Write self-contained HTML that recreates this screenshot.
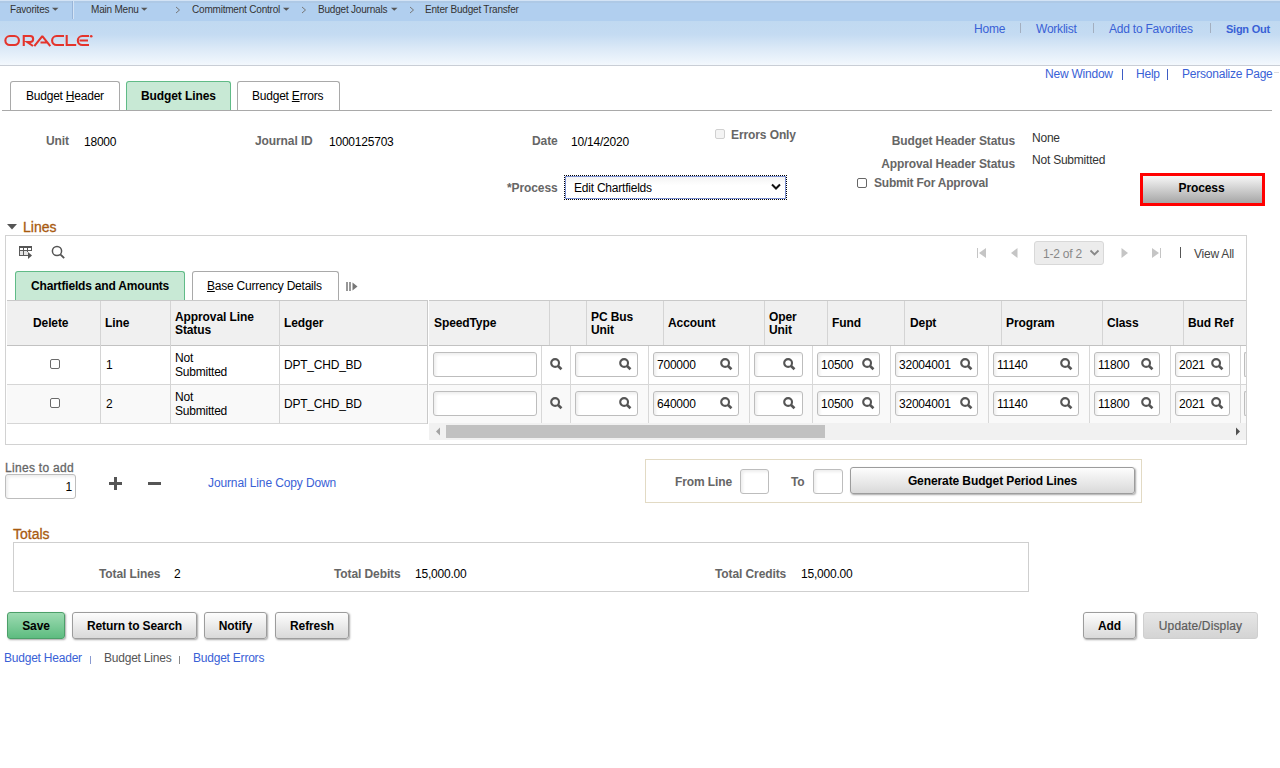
<!DOCTYPE html>
<html><head><meta charset="utf-8">
<style>
*{box-sizing:border-box;margin:0;padding:0}
html,body{width:1280px;height:768px;overflow:hidden;background:#fff}
body{font-family:"Liberation Sans",sans-serif;font-size:12px;color:#000;position:relative}
.a{position:absolute;white-space:nowrap;line-height:14px;letter-spacing:-0.22px}
.b,.lbl,.btn{letter-spacing:-0.1px}
.b{font-weight:bold}
.lbl{color:#666;font-weight:bold}
.lnk{color:#3961d6}
.u{text-decoration:underline}
.hdrbar{position:absolute;left:0;top:0;width:1280px;height:21px;background:linear-gradient(#aec9e6 0,#aec9e6 2px,#b1cfef 2px);border-top:1px solid #d3e3f5}
.hdr{position:absolute;left:0;top:21px;width:1280px;height:44px;background:linear-gradient(#c0d9f1 0%,#c4dbf2 30%,#dbe9f7 62%,#f3f8fd 100%)}
.hline{position:absolute;left:0;top:65px;width:1280px;height:1px;background:#c9ced6}
.nav{position:absolute;top:2.5px;font-size:10px;line-height:14px;color:#333;white-space:nowrap;letter-spacing:-0.2px}
.caret{display:inline-block;width:0;height:0;border-left:4px solid transparent;border-right:4px solid transparent;border-top:4px solid #444;vertical-align:middle;margin-left:2px}
.tab{position:absolute;border:1px solid #a9a9a9;border-bottom:none;border-radius:3px 3px 0 0;background:#fff}
.tab.on{background:#c8e9d5;border-color:#60bb87}
.chk{position:absolute;width:11px;height:11px;border:1px solid #888;border-radius:2px;background:#fff}
.inp{position:absolute;border:1px solid #bdbdbd;border-radius:3px;background:#fff;box-shadow:inset 2px 2px 3px rgba(0,0,0,0.07)}
.btn{position:absolute;border:1px solid #9c9c9c;border-radius:3px;background:linear-gradient(#fdfdfd,#d9d9d9);box-shadow:1px 1px 2px rgba(0,0,0,0.35);font-weight:bold;text-align:center;line-height:26px}
</style></head><body>

<!-- top nav bar -->
<div class="hdrbar"></div>
<div class="hdr"></div>
<div class="hline"></div>
<div class="a" style="left:72px;top:1px;width:1px;height:18px;background:#98b5d9"></div><div class="a" style="left:73px;top:1px;width:1px;height:18px;background:#d5e4f5"></div>
<div class="nav" style="left:10px">Favorites</div>
<div class="nav" style="left:91px">Main Menu</div>
<div class="nav" style="left:192px">Commitment Control</div>
<div class="nav" style="left:318px">Budget Journals</div>
<div class="nav" style="left:425px">Enter Budget Transfer</div>
<svg class="a" style="left:52px;top:7px" width="7" height="5" viewBox="0 0 7 5"><path d="M0 0.8H6.5L3.25 3.8Z" fill="#555"/></svg>
<svg class="a" style="left:141px;top:7px" width="7" height="5" viewBox="0 0 7 5"><path d="M0 0.8H6.5L3.25 3.8Z" fill="#555"/></svg>
<svg class="a" style="left:283px;top:7px" width="7" height="5" viewBox="0 0 7 5"><path d="M0 0.8H6.5L3.25 3.8Z" fill="#555"/></svg>
<svg class="a" style="left:391px;top:7px" width="7" height="5" viewBox="0 0 7 5"><path d="M0 0.8H6.5L3.25 3.8Z" fill="#555"/></svg>
<svg class="a" style="left:175px;top:6px" width="6" height="8" viewBox="0 0 6 8"><path d="M1 1L4.5 4L1 7" fill="none" stroke="#777" stroke-width="1"/></svg>
<svg class="a" style="left:301px;top:6px" width="6" height="8" viewBox="0 0 6 8"><path d="M1 1L4.5 4L1 7" fill="none" stroke="#777" stroke-width="1"/></svg>
<svg class="a" style="left:409px;top:6px" width="6" height="8" viewBox="0 0 6 8"><path d="M1 1L4.5 4L1 7" fill="none" stroke="#777" stroke-width="1"/></svg>

<!-- oracle logo -->
<svg class="a" style="left:0;top:30px" width="100" height="22" viewBox="0 30 100 22">
<g fill="none" stroke="#e4342c" stroke-width="2.1">
<rect x="5.35" y="36.05" width="13.6" height="9" rx="4.5"/>
<path d="M23.75 46V36.05H30.2a2.95 2.95 0 0 1 0 5.9H27.2L33 46"/>
<path d="M34.3 46.2L42.3 36.2L50.3 46.2M40.5 42.5H47.6" stroke-linejoin="bevel"/>
<path d="M64 36.05H56.6a4.5 4.5 0 0 0 0 9H64"/>
<path d="M66.7 35V45.05H76.2"/>
<path d="M89 36.05H82.3a4.5 4.5 0 0 0 0 9H89M79.5 40.55H88"/>
</g>
<circle cx="91.2" cy="36.3" r="1.3" fill="#e4342c"/>
</svg>

<!-- header links -->
<div class="a lnk" style="left:974px;top:22px">Home</div>
<div class="a" style="left:1020px;top:23px;width:1px;height:10px;background:#a3afc0"></div>
<div class="a lnk" style="left:1036px;top:22px">Worklist</div>
<div class="a" style="left:1093px;top:23px;width:1px;height:10px;background:#a3afc0"></div>
<div class="a lnk" style="left:1109px;top:22px">Add to Favorites</div>
<div class="a" style="left:1210px;top:23px;width:1px;height:10px;background:#a3afc0"></div>
<div class="a lnk b" style="left:1226px;top:22px;font-size:11px;letter-spacing:-0.25px">Sign Out</div>

<div class="a lnk" style="left:1045px;top:67px">New Window</div>
<div class="a" style="left:1122px;top:69px;width:1px;height:11px;background:#3d5cc4"></div>
<div class="a lnk" style="left:1136px;top:67px">Help</div>
<div class="a" style="left:1167px;top:69px;width:1px;height:11px;background:#3d5cc4"></div>
<div class="a lnk" style="left:1182px;top:67px">Personalize Page</div>
<div class="a" style="left:1274px;top:72px;width:5px;height:1px;background:#dcdcdc"></div>

<!-- page tabs -->
<div class="tab" style="left:10px;top:81px;width:110px;height:29px"></div>
<div class="tab on" style="left:126px;top:81px;width:105px;height:29px"></div>
<div class="tab" style="left:237px;top:81px;width:103px;height:29px"></div>
<div class="a" style="left:26px;top:89px">Budget <span class="u">H</span>eader</div>
<div class="a b" style="left:141px;top:89px">Budget Lines</div>
<div class="a" style="left:252px;top:89px">Budget <span class="u">E</span>rrors</div>
<div class="a" style="left:2px;top:110px;width:1270px;height:1px;background:#a9a9a9"></div>

<!-- header fields -->
<div class="a lbl" style="left:46px;top:134px">Unit</div>
<div class="a" style="left:84px;top:135px">18000</div>
<div class="a lbl" style="left:255px;top:134px">Journal ID</div>
<div class="a" style="left:329px;top:135px">1000125703</div>
<div class="a lbl" style="left:532px;top:134px">Date</div>
<div class="a" style="left:571px;top:135px">10/14/2020</div>
<div class="chk" style="left:715px;top:129px;width:10px;height:10px;border-color:#d0d0d0;background:#f4f4f4"></div>
<div class="a lbl" style="left:731px;top:128px">Errors Only</div>
<div class="a lbl" style="left:850px;top:134px;width:165px;text-align:right">Budget Header Status</div>
<div class="a" style="left:1032px;top:131px;color:#333">None</div>
<div class="a lbl" style="left:850px;top:157px;width:165px;text-align:right">Approval Header Status</div>
<div class="a" style="left:1032px;top:153px;color:#333">Not Submitted</div>
<div class="chk" style="left:857px;top:178px;width:10px;height:10px;border-color:#666"></div>
<div class="a lbl" style="left:874px;top:176px;letter-spacing:-0.22px">Submit For Approval</div>
<div class="a lbl" style="left:507px;top:181px">*Process</div>
<div class="a" style="left:564px;top:175px;width:223px;height:25px;border:1px dotted #000"></div>
<div class="a" style="left:565px;top:176px;width:221px;height:23px;border:1px solid #7b8fd0;background:linear-gradient(#f4f4f4,#fff 40%)"></div>
<div class="a" style="left:574px;top:181px">Edit Chartfields</div>
<svg class="a" style="left:771px;top:183px" width="10" height="8" viewBox="0 0 10 8"><path d="M1 1.5L5 5.5L9 1.5" fill="none" stroke="#111" stroke-width="2"/></svg>
<div class="a" style="left:1140px;top:173px;width:125px;height:33px;border:3px solid #f00;background:linear-gradient(#f7f7f7,#a6a6a6)"></div>
<div class="a b" style="left:1142px;top:181px;width:119px;text-align:center">Process</div>

<!-- Lines section -->
<svg class="a" style="left:6px;top:223px" width="12" height="8" viewBox="0 0 12 8"><path d="M1 1H11L6 6.5Z" fill="#555"/></svg>
<div class="a" style="left:23px;top:220px;font-size:14px;line-height:14px;color:#a85a10;letter-spacing:0;-webkit-text-stroke:0.3px #a85a10">Lines</div>
<div class="a" style="left:5px;top:235px;width:1242px;height:210px;border:1px solid #d2d2d2"></div>

<!-- grid toolbar -->
<svg class="a" style="left:19px;top:246px" width="14" height="14" viewBox="0 0 14 14">
<rect x="0" y="0" width="13" height="2" fill="#555"/>
<rect x="1" y="5" width="8" height="4" fill="#e4e4e4"/>
<path d="M0.5 2V10M4.5 2V10M8.5 2V6M12.5 2V5M0 4.5H13M0 9.5H9" stroke="#5a5a5a" stroke-width="1" fill="none"/>
<path d="M9 6V13L13 9.5Z" fill="#555"/>
</svg>
<svg class="a" style="left:51px;top:245px" width="15" height="15" viewBox="0 0 15 15"><circle cx="6" cy="6" r="4.6" fill="none" stroke="#555" stroke-width="1.5"/><path d="M9.3 9.3L13.2 13.2" stroke="#555" stroke-width="1.8"/></svg>

<svg class="a" style="left:976px;top:247px" width="12" height="12" viewBox="0 0 12 12"><path d="M1.5 1V11" stroke="#c5c5c5" stroke-width="1"/><path d="M10 1V11L3 6Z" fill="#c5c5c5"/></svg>
<svg class="a" style="left:1010px;top:247px" width="9" height="12" viewBox="0 0 9 12"><path d="M7.5 1V11L1 6Z" fill="#c5c5c5"/></svg>
<div class="a" style="left:1034px;top:241px;width:70px;height:24px;border:1px solid #d8d8d8;border-radius:3px;background:#ececec"></div>
<div class="a" style="left:1043px;top:247px;color:#888">1-2 of 2</div>
<svg class="a" style="left:1089px;top:249px" width="11" height="8" viewBox="0 0 11 8"><path d="M1.5 1.5L5.5 5.5L9.5 1.5" fill="none" stroke="#888" stroke-width="1.8"/></svg>
<svg class="a" style="left:1120px;top:247px" width="9" height="12" viewBox="0 0 9 12"><path d="M1.5 1V11L8 6Z" fill="#c5c5c5"/></svg>
<svg class="a" style="left:1151px;top:247px" width="12" height="12" viewBox="0 0 12 12"><path d="M1 1V11L8 6Z" fill="#c5c5c5"/><path d="M9.5 1V11" stroke="#c5c5c5" stroke-width="1"/></svg>
<div class="a" style="left:1180px;top:247px;width:1px;height:11px;background:#555"></div>
<div class="a" style="left:1194px;top:247px;color:#444">View All</div>

<!-- grid tabs -->
<div class="tab on" style="left:15px;top:271px;width:170px;height:30px"></div>
<div class="tab" style="left:192px;top:271px;width:147px;height:30px"></div>
<div class="a b" style="left:31px;top:279px;letter-spacing:-0.18px">Chartfields and Amounts</div>
<div class="a" style="left:207px;top:279px"><span class="u">B</span>ase Currency Details</div>
<svg class="a" style="left:346px;top:282px" width="12" height="10" viewBox="0 0 12 10"><path d="M1 0V9M4 0V9" stroke="#777" stroke-width="1.5"/><path d="M6.5 0.5V8.5L11.5 4.5Z" fill="#777"/></svg>

<!-- GRID -->
<div class="a" style="left:7px;top:300px;width:421px;height:46px;background:#f0f0f0;border-top:1px solid #c9c9c9;border-bottom:1px solid #c2c2c2"></div>
<div class="a" style="left:429px;top:300px;width:817px;height:46px;background:#f0f0f0;border-top:1px solid #c9c9c9;border-bottom:1px solid #c2c2c2"></div>
<div class="a" style="left:427px;top:300px;width:1px;height:124px;background:#c9c9c9"></div>
<div class="a" style="left:549px;top:301px;width:1px;height:44px;background:#d4d4d4"></div>
<div class="a" style="left:586px;top:301px;width:1px;height:44px;background:#d4d4d4"></div>
<div class="a" style="left:663px;top:301px;width:1px;height:44px;background:#d4d4d4"></div>
<div class="a" style="left:764px;top:301px;width:1px;height:44px;background:#d4d4d4"></div>
<div class="a" style="left:827px;top:301px;width:1px;height:44px;background:#d4d4d4"></div>
<div class="a" style="left:904px;top:301px;width:1px;height:44px;background:#d4d4d4"></div>
<div class="a" style="left:1001px;top:301px;width:1px;height:44px;background:#d4d4d4"></div>
<div class="a" style="left:1102px;top:301px;width:1px;height:44px;background:#d4d4d4"></div>
<div class="a" style="left:1183px;top:301px;width:1px;height:44px;background:#d4d4d4"></div>
<div class="a" style="left:7px;top:346px;width:420px;height:38px;background:#fff"></div>
<div class="a" style="left:7px;top:384px;width:420px;height:40px;background:#f9f9f9;border-top:1px solid #d6d6d6;border-bottom:1px solid #d6d6d6"></div>
<div class="a" style="left:429px;top:346px;width:817px;height:38px;background:#fff"></div>
<div class="a" style="left:429px;top:384px;width:817px;height:39px;background:#f9f9f9;border-top:1px solid #d6d6d6"></div>
<div class="a" style="left:100px;top:301px;width:1px;height:122px;background:#d4d4d4"></div>
<div class="a" style="left:170px;top:301px;width:1px;height:122px;background:#d4d4d4"></div>
<div class="a" style="left:279px;top:301px;width:1px;height:122px;background:#d4d4d4"></div>
<div class="a" style="left:541px;top:346px;width:1px;height:77px;background:#d8d8d8"></div>
<div class="a" style="left:570px;top:346px;width:1px;height:77px;background:#d8d8d8"></div>
<div class="a" style="left:648px;top:346px;width:1px;height:77px;background:#d8d8d8"></div>
<div class="a" style="left:749px;top:346px;width:1px;height:77px;background:#d8d8d8"></div>
<div class="a" style="left:812px;top:346px;width:1px;height:77px;background:#d8d8d8"></div>
<div class="a" style="left:890px;top:346px;width:1px;height:77px;background:#d8d8d8"></div>
<div class="a" style="left:988px;top:346px;width:1px;height:77px;background:#d8d8d8"></div>
<div class="a" style="left:1089px;top:346px;width:1px;height:77px;background:#d8d8d8"></div>
<div class="a" style="left:1170px;top:346px;width:1px;height:77px;background:#d8d8d8"></div>
<div class="a" style="left:1240px;top:346px;width:1px;height:77px;background:#d8d8d8"></div>
<div class="a b" style="left:33px;top:316px">Delete</div>
<div class="a b" style="left:105px;top:316px">Line</div>
<div class="a b" style="left:175px;top:311px;line-height:13px">Approval Line<br>Status</div>
<div class="a b" style="left:284px;top:316px">Ledger</div>
<div class="a b" style="left:434px;top:316px">SpeedType</div>
<div class="a b" style="left:591px;top:311px;line-height:13px">PC Bus<br>Unit</div>
<div class="a b" style="left:668px;top:316px">Account</div>
<div class="a b" style="left:769px;top:311px;line-height:13px">Oper<br>Unit</div>
<div class="a b" style="left:832px;top:316px">Fund</div>
<div class="a b" style="left:910px;top:316px">Dept</div>
<div class="a b" style="left:1006px;top:316px">Program</div>
<div class="a b" style="left:1107px;top:316px">Class</div>
<div class="a b" style="left:1188px;top:316px">Bud Ref</div>
<div class="chk" style="left:50px;top:359px;width:10px;height:10px;border-color:#6a6a6a"></div>
<div class="a" style="left:106px;top:358px">1</div>
<div class="a" style="left:175px;top:351px;line-height:14px">Not<br>Submitted</div>
<div class="a" style="left:284px;top:358px">DPT_CHD_BD</div>
<div class="inp" style="left:433px;top:352px;width:104px;height:25px"></div>
<svg class="a" style="left:550px;top:358px" width="13" height="13" viewBox="0 0 13 13"><circle cx="5.1" cy="5" r="3.9" fill="none" stroke="#555" stroke-width="2.1"/><path d="M7.8 7.8L11.5 11.3" stroke="#555" stroke-width="2.6"/></svg>
<div class="inp" style="left:575px;top:352px;width:63px;height:25px"></div>
<svg class="a" style="left:619px;top:358px" width="13" height="13" viewBox="0 0 13 13"><circle cx="5.1" cy="5" r="3.9" fill="none" stroke="#555" stroke-width="2.1"/><path d="M7.8 7.8L11.5 11.3" stroke="#555" stroke-width="2.6"/></svg>
<div class="inp" style="left:653px;top:352px;width:86px;height:25px"></div>
<div class="a" style="left:657px;top:358px">700000</div>
<svg class="a" style="left:720px;top:358px" width="13" height="13" viewBox="0 0 13 13"><circle cx="5.1" cy="5" r="3.9" fill="none" stroke="#555" stroke-width="2.1"/><path d="M7.8 7.8L11.5 11.3" stroke="#555" stroke-width="2.6"/></svg>
<div class="inp" style="left:754px;top:352px;width:49px;height:25px"></div>
<svg class="a" style="left:783px;top:358px" width="13" height="13" viewBox="0 0 13 13"><circle cx="5.1" cy="5" r="3.9" fill="none" stroke="#555" stroke-width="2.1"/><path d="M7.8 7.8L11.5 11.3" stroke="#555" stroke-width="2.6"/></svg>
<div class="inp" style="left:817px;top:352px;width:63px;height:25px"></div>
<div class="a" style="left:821px;top:358px">10500</div>
<svg class="a" style="left:862px;top:358px" width="13" height="13" viewBox="0 0 13 13"><circle cx="5.1" cy="5" r="3.9" fill="none" stroke="#555" stroke-width="2.1"/><path d="M7.8 7.8L11.5 11.3" stroke="#555" stroke-width="2.6"/></svg>
<div class="inp" style="left:895px;top:352px;width:83px;height:25px"></div>
<div class="a" style="left:899px;top:358px">32004001</div>
<svg class="a" style="left:960px;top:358px" width="13" height="13" viewBox="0 0 13 13"><circle cx="5.1" cy="5" r="3.9" fill="none" stroke="#555" stroke-width="2.1"/><path d="M7.8 7.8L11.5 11.3" stroke="#555" stroke-width="2.6"/></svg>
<div class="inp" style="left:993px;top:352px;width:86px;height:25px"></div>
<div class="a" style="left:997px;top:358px">11140</div>
<svg class="a" style="left:1060px;top:358px" width="13" height="13" viewBox="0 0 13 13"><circle cx="5.1" cy="5" r="3.9" fill="none" stroke="#555" stroke-width="2.1"/><path d="M7.8 7.8L11.5 11.3" stroke="#555" stroke-width="2.6"/></svg>
<div class="inp" style="left:1094px;top:352px;width:66px;height:25px"></div>
<div class="a" style="left:1098px;top:358px">11800</div>
<svg class="a" style="left:1141px;top:358px" width="13" height="13" viewBox="0 0 13 13"><circle cx="5.1" cy="5" r="3.9" fill="none" stroke="#555" stroke-width="2.1"/><path d="M7.8 7.8L11.5 11.3" stroke="#555" stroke-width="2.6"/></svg>
<div class="inp" style="left:1175px;top:352px;width:55px;height:25px"></div>
<div class="a" style="left:1179px;top:358px">2021</div>
<svg class="a" style="left:1211px;top:358px" width="13" height="13" viewBox="0 0 13 13"><circle cx="5.1" cy="5" r="3.9" fill="none" stroke="#555" stroke-width="2.1"/><path d="M7.8 7.8L11.5 11.3" stroke="#555" stroke-width="2.6"/></svg>
<div class="inp" style="left:1244px;top:352px;width:2px;height:25px;border-right:none;border-radius:2px 0 0 2px;box-shadow:none;background:#f3f3f3"></div>
<div class="chk" style="left:50px;top:398px;width:10px;height:10px;border-color:#6a6a6a"></div>
<div class="a" style="left:106px;top:397px">2</div>
<div class="a" style="left:175px;top:390px;line-height:14px">Not<br>Submitted</div>
<div class="a" style="left:284px;top:397px">DPT_CHD_BD</div>
<div class="inp" style="left:433px;top:391px;width:104px;height:25px"></div>
<svg class="a" style="left:550px;top:397px" width="13" height="13" viewBox="0 0 13 13"><circle cx="5.1" cy="5" r="3.9" fill="none" stroke="#555" stroke-width="2.1"/><path d="M7.8 7.8L11.5 11.3" stroke="#555" stroke-width="2.6"/></svg>
<div class="inp" style="left:575px;top:391px;width:63px;height:25px"></div>
<svg class="a" style="left:619px;top:397px" width="13" height="13" viewBox="0 0 13 13"><circle cx="5.1" cy="5" r="3.9" fill="none" stroke="#555" stroke-width="2.1"/><path d="M7.8 7.8L11.5 11.3" stroke="#555" stroke-width="2.6"/></svg>
<div class="inp" style="left:653px;top:391px;width:86px;height:25px"></div>
<div class="a" style="left:657px;top:397px">640000</div>
<svg class="a" style="left:720px;top:397px" width="13" height="13" viewBox="0 0 13 13"><circle cx="5.1" cy="5" r="3.9" fill="none" stroke="#555" stroke-width="2.1"/><path d="M7.8 7.8L11.5 11.3" stroke="#555" stroke-width="2.6"/></svg>
<div class="inp" style="left:754px;top:391px;width:49px;height:25px"></div>
<svg class="a" style="left:783px;top:397px" width="13" height="13" viewBox="0 0 13 13"><circle cx="5.1" cy="5" r="3.9" fill="none" stroke="#555" stroke-width="2.1"/><path d="M7.8 7.8L11.5 11.3" stroke="#555" stroke-width="2.6"/></svg>
<div class="inp" style="left:817px;top:391px;width:63px;height:25px"></div>
<div class="a" style="left:821px;top:397px">10500</div>
<svg class="a" style="left:862px;top:397px" width="13" height="13" viewBox="0 0 13 13"><circle cx="5.1" cy="5" r="3.9" fill="none" stroke="#555" stroke-width="2.1"/><path d="M7.8 7.8L11.5 11.3" stroke="#555" stroke-width="2.6"/></svg>
<div class="inp" style="left:895px;top:391px;width:83px;height:25px"></div>
<div class="a" style="left:899px;top:397px">32004001</div>
<svg class="a" style="left:960px;top:397px" width="13" height="13" viewBox="0 0 13 13"><circle cx="5.1" cy="5" r="3.9" fill="none" stroke="#555" stroke-width="2.1"/><path d="M7.8 7.8L11.5 11.3" stroke="#555" stroke-width="2.6"/></svg>
<div class="inp" style="left:993px;top:391px;width:86px;height:25px"></div>
<div class="a" style="left:997px;top:397px">11140</div>
<svg class="a" style="left:1060px;top:397px" width="13" height="13" viewBox="0 0 13 13"><circle cx="5.1" cy="5" r="3.9" fill="none" stroke="#555" stroke-width="2.1"/><path d="M7.8 7.8L11.5 11.3" stroke="#555" stroke-width="2.6"/></svg>
<div class="inp" style="left:1094px;top:391px;width:66px;height:25px"></div>
<div class="a" style="left:1098px;top:397px">11800</div>
<svg class="a" style="left:1141px;top:397px" width="13" height="13" viewBox="0 0 13 13"><circle cx="5.1" cy="5" r="3.9" fill="none" stroke="#555" stroke-width="2.1"/><path d="M7.8 7.8L11.5 11.3" stroke="#555" stroke-width="2.6"/></svg>
<div class="inp" style="left:1175px;top:391px;width:55px;height:25px"></div>
<div class="a" style="left:1179px;top:397px">2021</div>
<svg class="a" style="left:1211px;top:397px" width="13" height="13" viewBox="0 0 13 13"><circle cx="5.1" cy="5" r="3.9" fill="none" stroke="#555" stroke-width="2.1"/><path d="M7.8 7.8L11.5 11.3" stroke="#555" stroke-width="2.6"/></svg>
<div class="inp" style="left:1244px;top:391px;width:2px;height:25px;border-right:none;border-radius:2px 0 0 2px;box-shadow:none;background:#f3f3f3"></div>
<div class="a" style="left:429px;top:423px;width:817px;height:17px;background:#f1f1f1"></div>
<div class="a" style="left:446px;top:425px;width:379px;height:13px;background:#c1c1c1"></div>
<svg class="a" style="left:435px;top:427px" width="6" height="9" viewBox="0 0 6 9"><path d="M5 0.5V8.5L1 4.5Z" fill="#a3a3a3"/></svg>
<svg class="a" style="left:1235px;top:427px" width="6" height="9" viewBox="0 0 6 9"><path d="M1 0.5V8.5L5 4.5Z" fill="#505050"/></svg>
<!-- /GRID -->
<!-- lines to add -->
<div class="a" style="left:5px;top:461px;color:#666;letter-spacing:0.3px;-webkit-text-stroke:0.3px #666">Lines to add</div>
<div class="inp" style="left:5px;top:474px;width:71px;height:25px"></div>
<div class="a" style="left:5px;top:480px;width:67px;text-align:right">1</div>
<svg class="a" style="left:108px;top:476px" width="15" height="15" viewBox="0 0 15 15"><path d="M7.5 1V14M1 7.5H14" stroke="#555" stroke-width="3"/></svg>
<div class="a" style="left:148px;top:482px;width:13px;height:3px;background:#555"></div>
<div class="a lnk" style="left:208px;top:476px;letter-spacing:-0.12px">Journal Line Copy Down</div>

<div class="a" style="left:645px;top:459px;width:497px;height:44px;border:1px solid #e2dac4"></div>
<div class="a lbl" style="left:675px;top:475px">From Line</div>
<div class="inp" style="left:740px;top:469px;width:29px;height:25px"></div>
<div class="a lbl" style="left:791px;top:475px">To</div>
<div class="inp" style="left:813px;top:469px;width:30px;height:25px"></div>
<div class="btn" style="left:850px;top:467px;width:285px;height:27px">Generate Budget Period Lines</div>

<!-- totals -->
<div class="a" style="left:13px;top:527px;font-size:14px;color:#a85a10;letter-spacing:0;-webkit-text-stroke:0.3px #a85a10">Totals</div>
<div class="a" style="left:13px;top:542px;width:1016px;height:50px;border:1px solid #cfcfcf"></div>
<div class="a lbl" style="left:99px;top:567px">Total Lines</div>
<div class="a" style="left:174px;top:567px">2</div>
<div class="a lbl" style="left:334px;top:567px">Total Debits</div>
<div class="a" style="left:415px;top:567px">15,000.00</div>
<div class="a lbl" style="left:715px;top:567px">Total Credits</div>
<div class="a" style="left:801px;top:567px">15,000.00</div>

<!-- buttons -->
<div class="btn" style="left:7px;top:612px;width:58px;height:27px;background:linear-gradient(#9ddbb2,#5ebc80);border-color:#4c9f69">Save</div>
<div class="btn" style="left:72px;top:612px;width:125px;height:27px">Return to Search</div>
<div class="btn" style="left:204px;top:612px;width:63px;height:27px">Notify</div>
<div class="btn" style="left:275px;top:612px;width:74px;height:27px">Refresh</div>
<div class="btn" style="left:1083px;top:612px;width:53px;height:27px">Add</div>
<div class="btn" style="left:1143px;top:612px;width:115px;height:27px;color:#5c5c5c;font-weight:normal;-webkit-text-stroke:0.2px #5c5c5c;letter-spacing:0.15px;background:linear-gradient(#e6e6e6,#d4d4d4);border-color:#cfcfcf;box-shadow:none">Update/Display</div>

<!-- footer links -->
<div class="a lnk" style="left:4px;top:651px">Budget Header</div>
<div class="a" style="left:90px;top:656px;width:1px;height:8px;background:#8a9ad0"></div>
<div class="a" style="left:104px;top:651px;color:#555">Budget Lines</div>
<div class="a" style="left:179px;top:656px;width:1px;height:8px;background:#888"></div>
<div class="a lnk" style="left:193px;top:651px">Budget Errors</div>

</body></html>
